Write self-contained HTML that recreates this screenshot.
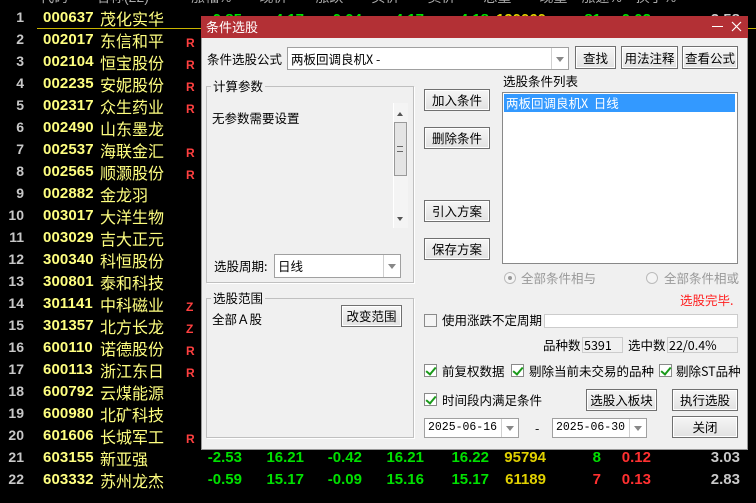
<!DOCTYPE html>
<html><head><meta charset="utf-8"><style>
*{margin:0;padding:0;box-sizing:border-box}
body{width:756px;height:503px;background:#000;position:relative;overflow:hidden;font-family:"Liberation Sans","Noto Sans CJK SC",sans-serif}
.a{position:absolute;white-space:nowrap}
.idx{color:#c8c8c8;font:bold 14px "Liberation Sans",sans-serif;width:24px;text-align:right;left:0}
.code{color:#ffff80;font:bold 15px "Liberation Sans",sans-serif;left:43px;letter-spacing:0.1px}
.nm{color:#ffff80;font-size:16px;left:100px;font-family:"Noto Sans CJK SC",sans-serif;line-height:20px}
.flag{color:#ff4040;font:bold 12px "Liberation Sans",sans-serif;left:186px}
.num{font:bold 15px "Liberation Sans",sans-serif;text-align:right}
.g{color:#00e000}.y{color:#e0d000}.r{color:#ff3030}.w{color:#c8c8c8}
.dlg{position:absolute;left:201px;top:16px;width:547px;height:434px;background:#f0f0f0;border:1px solid #999}
.t{font-size:12.5px;color:#000;font-family:"Noto Sans CJK SC",sans-serif;line-height:16px}
.btn{position:absolute;background:linear-gradient(#f6f6f6,#e2e2e2);border:1px solid #707070;box-shadow:inset 0 0 0 1px #fff;font-size:12.5px;text-align:center;font-family:"Noto Sans CJK SC",sans-serif;color:#000}
.box{position:absolute;background:#fff;border:1px solid #a0a0a0}
.grp{position:absolute;border:1px solid #c0c0c0;box-shadow:1px 1px 0 #fff}
.lg{position:absolute;background:#f0f0f0;padding:0 2px;top:-9px;left:4px}
.dd{position:absolute;right:0;top:0;bottom:0;width:17px;border-left:1px solid #d0d0d0}
.dd:after{content:"";position:absolute;left:4px;top:50%;margin-top:-2px;border:4px solid transparent;border-top:5px solid #888}
.cb{position:absolute;width:13px;height:13px;border:1px solid #8a8a8a;background:#fff}
.cb.k:after{content:"";position:absolute;left:3px;top:0px;width:4px;height:8px;border:solid #1a9a1a;border-width:0 2px 2px 0;transform:rotate(40deg)}
</style></head><body>
<div class="a w" style="left:40px;top:-13px;font-size:14px;color:#aaa">代码　　名称(22)　　　涨幅%　　现价　　涨跌　　买价　　卖价　　总量　　现量　涨速%　换手%</div>
<div class="a" style="left:37px;top:28px;width:719px;height:1px;background:#c8b400"></div>

<div class="a idx" style="top:9px">1</div><div class="a code" style="top:9px">000637</div><div class="a nm" style="top:8px">茂化实华</div>
<div class="a idx" style="top:31px">2</div><div class="a code" style="top:31px">002017</div><div class="a nm" style="top:30px">东信和平</div><div class="a flag" style="top:36px">R</div>
<div class="a idx" style="top:53px">3</div><div class="a code" style="top:53px">002104</div><div class="a nm" style="top:52px">恒宝股份</div><div class="a flag" style="top:58px">R</div>
<div class="a idx" style="top:75px">4</div><div class="a code" style="top:75px">002235</div><div class="a nm" style="top:74px">安妮股份</div><div class="a flag" style="top:80px">R</div>
<div class="a idx" style="top:97px">5</div><div class="a code" style="top:97px">002317</div><div class="a nm" style="top:96px">众生药业</div><div class="a flag" style="top:102px">R</div>
<div class="a idx" style="top:119px">6</div><div class="a code" style="top:119px">002490</div><div class="a nm" style="top:118px">山东墨龙</div>
<div class="a idx" style="top:141px">7</div><div class="a code" style="top:141px">002537</div><div class="a nm" style="top:140px">海联金汇</div><div class="a flag" style="top:146px">R</div>
<div class="a idx" style="top:163px">8</div><div class="a code" style="top:163px">002565</div><div class="a nm" style="top:162px">顺灏股份</div><div class="a flag" style="top:168px">R</div>
<div class="a idx" style="top:185px">9</div><div class="a code" style="top:185px">002882</div><div class="a nm" style="top:184px">金龙羽</div>
<div class="a idx" style="top:207px">10</div><div class="a code" style="top:207px">003017</div><div class="a nm" style="top:206px">大洋生物</div>
<div class="a idx" style="top:229px">11</div><div class="a code" style="top:229px">003029</div><div class="a nm" style="top:228px">吉大正元</div>
<div class="a idx" style="top:251px">12</div><div class="a code" style="top:251px">300340</div><div class="a nm" style="top:250px">科恒股份</div>
<div class="a idx" style="top:273px">13</div><div class="a code" style="top:273px">300801</div><div class="a nm" style="top:272px">泰和科技</div>
<div class="a idx" style="top:295px">14</div><div class="a code" style="top:295px">301141</div><div class="a nm" style="top:294px">中科磁业</div><div class="a flag" style="top:300px">Z</div>
<div class="a idx" style="top:317px">15</div><div class="a code" style="top:317px">301357</div><div class="a nm" style="top:316px">北方长龙</div><div class="a flag" style="top:322px">Z</div>
<div class="a idx" style="top:339px">16</div><div class="a code" style="top:339px">600110</div><div class="a nm" style="top:338px">诺德股份</div><div class="a flag" style="top:344px">R</div>
<div class="a idx" style="top:361px">17</div><div class="a code" style="top:361px">600113</div><div class="a nm" style="top:360px">浙江东日</div><div class="a flag" style="top:366px">R</div>
<div class="a idx" style="top:383px">18</div><div class="a code" style="top:383px">600792</div><div class="a nm" style="top:382px">云煤能源</div>
<div class="a idx" style="top:405px">19</div><div class="a code" style="top:405px">600980</div><div class="a nm" style="top:404px">北矿科技</div>
<div class="a idx" style="top:427px">20</div><div class="a code" style="top:427px">601606</div><div class="a nm" style="top:426px">长城军工</div><div class="a flag" style="top:432px">R</div>
<div class="a idx" style="top:449px">21</div><div class="a code" style="top:449px">603155</div><div class="a nm" style="top:448px">新亚强</div>
<div class="a idx" style="top:471px">22</div><div class="a code" style="top:471px">603332</div><div class="a nm" style="top:470px">苏州龙杰</div>

<div class="a num g" style="top:11px;left:200px;width:42px">-0.85</div>
<div class="a num g" style="top:11px;left:260px;width:44px">4.17</div>
<div class="a num g" style="top:11px;left:320px;width:42px">-0.04</div>
<div class="a num g" style="top:11px;left:380px;width:44px">4.17</div>
<div class="a num g" style="top:11px;left:440px;width:49px">4.18</div>
<div class="a num y" style="top:11px;left:490px;width:56px">120060</div>
<div class="a num g" style="top:11px;left:580px;width:21px">81</div>
<div class="a num g" style="top:11px;left:610px;width:41px">0.03</div>
<div class="a num w" style="top:11px;left:700px;width:40px">2.58</div>

<div class="a num g" style="top:449px;left:200px;width:42px">-2.53</div>
<div class="a num g" style="top:449px;left:260px;width:44px">16.21</div>
<div class="a num g" style="top:449px;left:320px;width:42px">-0.42</div>
<div class="a num g" style="top:449px;left:380px;width:44px">16.21</div>
<div class="a num g" style="top:449px;left:440px;width:49px">16.22</div>
<div class="a num y" style="top:449px;left:490px;width:56px">95794</div>
<div class="a num g" style="top:449px;left:580px;width:21px">8</div>
<div class="a num r" style="top:449px;left:610px;width:41px">0.12</div>
<div class="a num w" style="top:449px;left:700px;width:40px">3.03</div>
<div class="a num g" style="top:471px;left:200px;width:42px">-0.59</div>
<div class="a num g" style="top:471px;left:260px;width:44px">15.17</div>
<div class="a num g" style="top:471px;left:320px;width:42px">-0.09</div>
<div class="a num g" style="top:471px;left:380px;width:44px">15.16</div>
<div class="a num g" style="top:471px;left:440px;width:49px">15.17</div>
<div class="a num y" style="top:471px;left:490px;width:56px">61189</div>
<div class="a num r" style="top:471px;left:580px;width:21px">7</div>
<div class="a num r" style="top:471px;left:610px;width:41px">0.13</div>
<div class="a num w" style="top:471px;left:700px;width:40px">2.83</div>

<div class="dlg"></div>
<div class="a" style="left:201px;top:16px;width:547px;height:22px;background:#b33035"></div>
<div class="a t" style="left:206px;top:19px;color:#fff;font-size:13px">条件选股</div>
<div class="a" style="left:712px;top:26px;width:11px;height:1px;background:#fff"></div>
<svg class="a" style="left:731px;top:21px" width="11" height="11"><path d="M1 1L10 10M10 1L1 10" stroke="#fff" stroke-width="1.2"/></svg>

<div class="a t" style="left:207px;top:51px">条件选股公式</div>
<div class="box" style="left:287px;top:47px;width:282px;height:23px"><span class="t" style="position:absolute;left:3px;top:3px">两板回调良机X -</span><div class="dd"></div></div>
<div class="btn" style="left:575px;top:46px;width:41px;height:23px;line-height:21px">查找</div>
<div class="btn" style="left:621px;top:46px;width:57px;height:23px;line-height:21px">用法注释</div>
<div class="btn" style="left:682px;top:46px;width:56px;height:23px;line-height:21px">查看公式</div>

<div class="grp" style="left:206px;top:86px;width:208px;height:197px"><span class="lg t">计算参数</span></div>
<div class="a t" style="left:212px;top:110px">无参数需要设置</div>
<div class="a" style="left:393px;top:103px;width:15px;height:125px;background:#f4f4f4;border-left:1px solid #fff"></div>
<div class="a" style="left:394px;top:122px;width:13px;height:54px;background:#e4e4e4;border:1px solid #999"></div>
<div class="a" style="left:397px;top:109px;border:3px solid transparent;border-bottom:4px solid #555"></div>
<div class="a" style="left:397px;top:217px;border:3px solid transparent;border-top:4px solid #555"></div>
<div class="a" style="left:397px;top:146px;width:6px;height:6px;border-top:1px solid #666;border-bottom:1px solid #666"></div>

<div class="a t" style="left:214px;top:258px">选股周期:</div>
<div class="box" style="left:274px;top:254px;width:127px;height:24px"><span class="t" style="position:absolute;left:3px;top:3px">日线</span><div class="dd"></div></div>

<div class="btn" style="left:424px;top:89px;width:66px;height:22px;line-height:20px">加入条件</div>
<div class="btn" style="left:424px;top:127px;width:66px;height:22px;line-height:20px">删除条件</div>
<div class="btn" style="left:424px;top:200px;width:66px;height:22px;line-height:20px">引入方案</div>
<div class="btn" style="left:424px;top:238px;width:66px;height:22px;line-height:20px">保存方案</div>

<div class="a t" style="left:503px;top:73px">选股条件列表</div>
<div class="box" style="left:502px;top:92px;width:236px;height:172px;border-color:#888"></div>
<div class="a t" style="left:504px;top:94px;width:231px;height:18px;background:#3399ff;color:#fff;padding-left:2px;line-height:18px">两板回调良机X&nbsp; 日线</div>

<div class="a" style="left:504px;top:272px;width:12px;height:12px;border-radius:50%;border:1px solid #bbb;background:#f4f4f4"></div>
<div class="a" style="left:508px;top:276px;width:4px;height:4px;border-radius:50%;background:#999"></div>
<div class="a t" style="left:521px;top:270px;color:#999">全部条件相与</div>
<div class="a" style="left:646px;top:272px;width:12px;height:12px;border-radius:50%;border:1px solid #bbb;background:#f4f4f4"></div>
<div class="a t" style="left:664px;top:270px;color:#999">全部条件相或</div>
<div class="a t" style="left:680px;top:292px;color:#ff2020">选股完毕.</div>

<div class="grp" style="left:206px;top:298px;width:208px;height:140px"><span class="lg t">选股范围</span></div>
<div class="a t" style="left:212px;top:311px">全部Ａ股</div>
<div class="btn" style="left:341px;top:305px;width:61px;height:22px;line-height:20px">改变范围</div>

<div class="cb" style="left:424px;top:314px;background:#f4f4f4"></div>
<div class="a t" style="left:442px;top:312px">使用涨跌不定周期</div>
<div class="box" style="left:544px;top:314px;width:194px;height:14px;border-color:#ccc"></div>
<div class="a t" style="left:543px;top:337px">品种数</div>
<div class="a t" style="left:582px;top:337px;width:41px;height:16px;border:1px solid #ccc;padding-left:1px;line-height:14px">5391</div>
<div class="a t" style="left:628px;top:337px">选中数</div>
<div class="a t" style="left:667px;top:337px;width:71px;height:16px;border:1px solid #ccc;padding-left:1px;line-height:14px">22/0.4%</div>

<div class="cb k" style="left:424px;top:364px"></div><div class="a t" style="left:442px;top:363px">前复权数据</div>
<div class="cb k" style="left:511px;top:364px"></div><div class="a t" style="left:529px;top:363px">剔除当前未交易的品种</div>
<div class="cb k" style="left:659px;top:364px"></div><div class="a t" style="left:676px;top:363px">剔除ST品种</div>
<div class="cb k" style="left:424px;top:393px"></div><div class="a t" style="left:442px;top:392px">时间段内满足条件</div>
<div class="btn" style="left:586px;top:389px;width:71px;height:22px;line-height:20px">选股入板块</div>
<div class="btn" style="left:672px;top:389px;width:66px;height:22px;line-height:20px">执行选股</div>

<div class="box" style="left:424px;top:418px;width:95px;height:20px"><span style="position:absolute;left:3px;top:2px;font-size:11.5px;font-family:'Liberation Mono',monospace">2025-06-16</span><div class="dd"></div></div>
<div class="a t" style="left:535px;top:420px">-</div>
<div class="box" style="left:552px;top:418px;width:95px;height:20px"><span style="position:absolute;left:3px;top:2px;font-size:11.5px;font-family:'Liberation Mono',monospace">2025-06-30</span><div class="dd"></div></div>
<div class="btn" style="left:672px;top:416px;width:66px;height:22px;line-height:20px">关闭</div>
</body></html>
